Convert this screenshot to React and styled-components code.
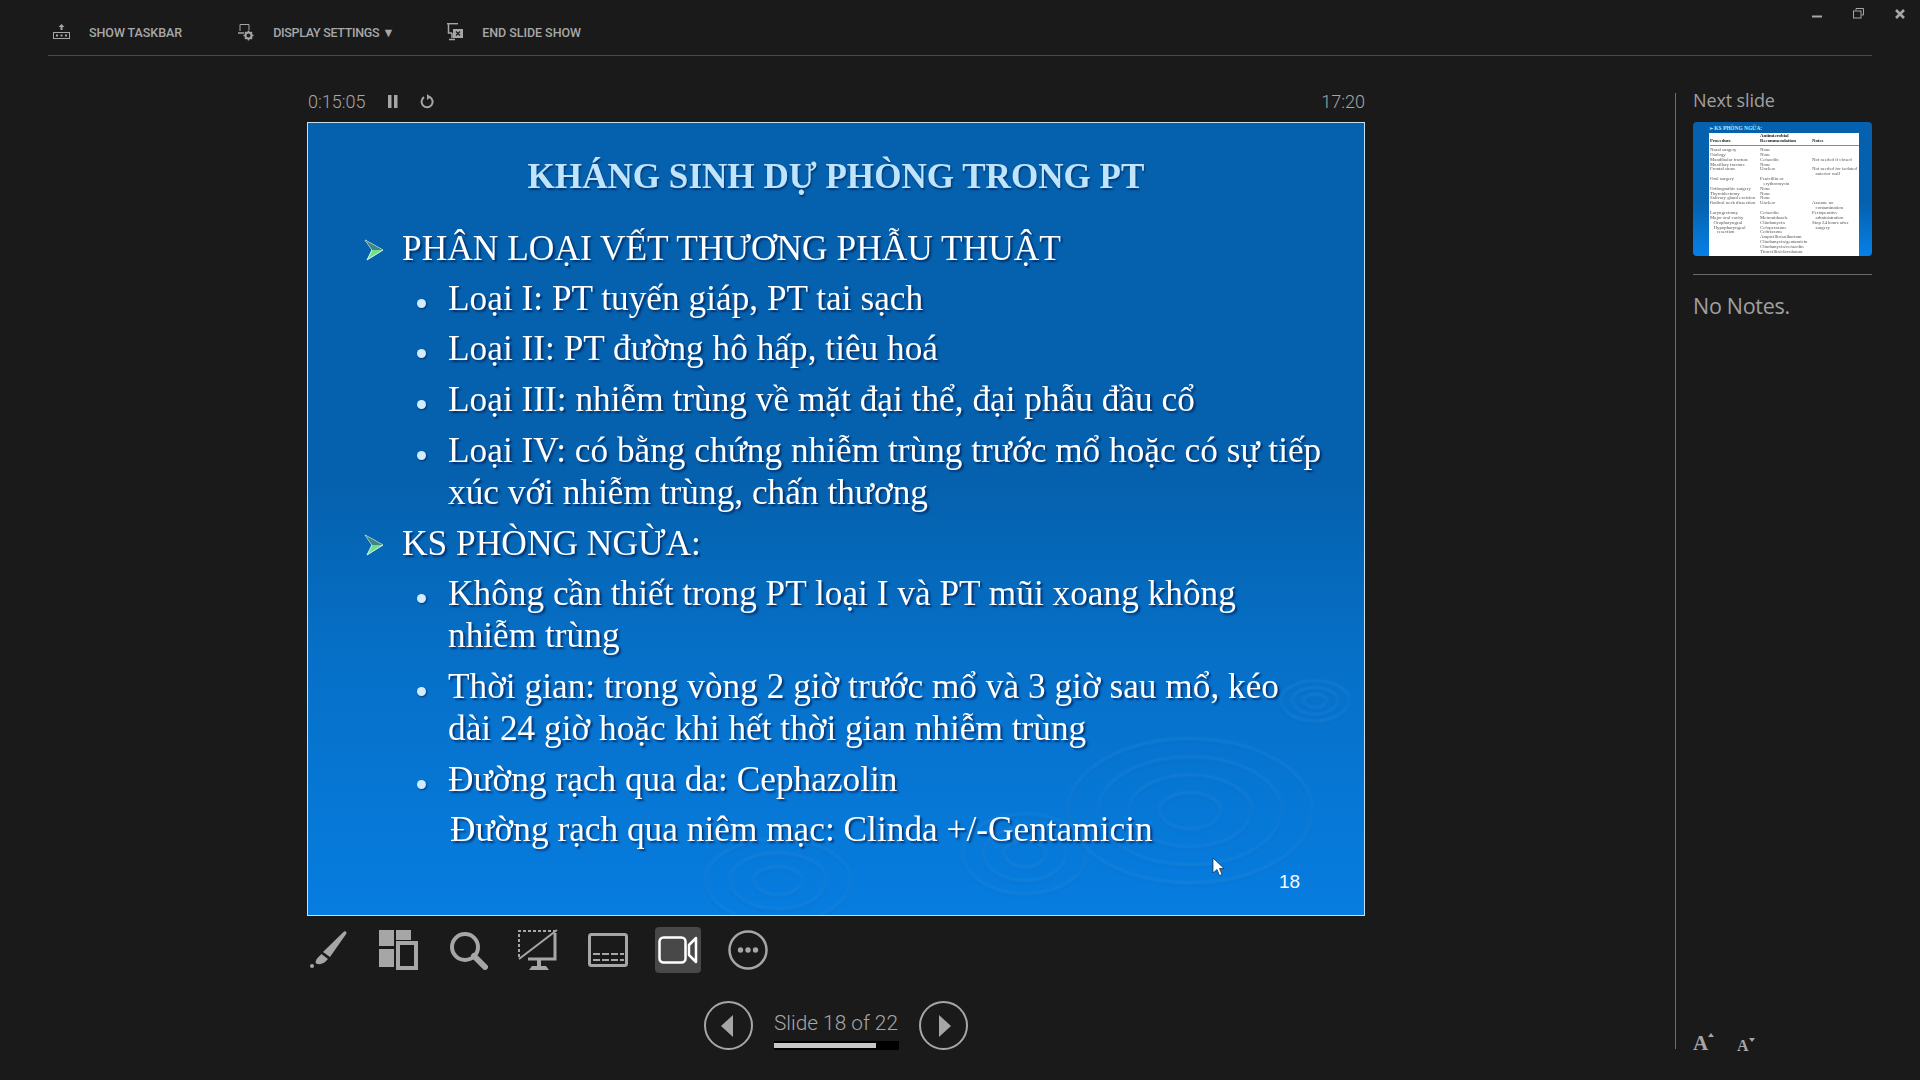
import React from "react";
import styled, { createGlobalStyle } from "styled-components";

const Global = createGlobalStyle`
  html, body { margin: 0; padding: 0; background: #1a1a1a; }
  * { box-sizing: border-box; }
  #root { width: 1920px; height: 1080px; overflow: hidden; }
`;

const Page = styled.div`
  width: 1920px; height: 1080px; background: #1a1a1a; color: #a6a6a6;
  font-family: "Roboto", "Liberation Sans", sans-serif;
  display: flex; flex-direction: column; overflow: hidden;
`;
const Header = styled.header`display: flex; height: 56px; padding-left: 48px;`;
const TopBar = styled.nav`
  flex: 1; display: flex; align-items: center; height: 56px; padding: 9px 0 0 5px;
  border-bottom: 1px solid #484848;
`;
const TopItem = styled.div`
  display: flex; align-items: center; gap: 19px; margin-right: ${p => p.$mr}px;
  font-size: 12.5px; font-weight: 500; color: #a8a8a8; white-space: nowrap; letter-spacing: ${p => p.$ls ?? -0.05}px;
`;
const WindowControls = styled.div`
  display: flex; align-self: flex-start; align-items: center; margin-left: -60px; padding-top: 5px; width: 108px; height: 22px;
`;
const Main = styled.main`display: flex; padding-top: 37px;`;
const Stage = styled.section`margin-left: 307px; width: 1058px; display: flex; flex-direction: column;`;
const TimerRow = styled.div`display: flex; align-items: center; height: 29px; padding-bottom: 13px; font-size: 18px; font-weight: 300; color: #a6a6a6;`;
const Timer = styled.span`margin-left: 1px; width: 80px;`;
const TimerIcon = styled.span`display: flex; width: 32px;`;
const Clock = styled.span`margin-left: auto;`;

const Slide = styled.div`
  position: relative; width: 1058px; height: 794px; overflow: hidden;
  border: 1px solid #c9dff0;
  background: linear-gradient(180deg, #0561ad 0%, #0561ad 45%, #0670c8 68%, #067de0 100%);
  font-family: "Liberation Serif", "Times New Roman", serif; color: #fff;
  padding: 33px 0 0;
`;
const Ripples = styled.svg`position: absolute; inset: 0; width: 100%; height: 100%; filter: blur(1.2px); opacity: .55;`;
const SlideBody = styled.div`position: relative; filter: blur(.3px);`;
const SlideTitle = styled.h1`
  margin: 0; text-align: center; font-size: 35.1px; font-weight: 700; line-height: 42px; color: #bfe4fb;
  text-shadow: 1px 2px 2px rgba(0, 20, 70, .55);
`;
const List = styled.ul`margin: 29px 0 0; padding: 0; list-style: none;`;
const Item = styled.li`
  display: flex; margin-top: ${p => (p.$first ? 0 : 8.7)}px;
  padding-left: ${p => (p.$level === 1 ? 56 : 109)}px;
  padding-right: 20px;
  font-size: ${p => (p.$level === 1 ? 35.4 : 35.3)}px; line-height: 42px; white-space: nowrap;
  text-shadow: 2px 2px 2px rgba(0, 20, 70, .65);
`;
const Arrow = styled.svg`flex: none; width: 20px; height: 22px; margin: 12px 18px 0 0;`;
const Dot = styled.span`
  flex: none; width: 9px; height: 9px; border-radius: 50%; background: #d2ecff; margin: 21px 22px 0 0;
  box-shadow: 1px 1px 2px rgba(0, 20, 70, .6);
`;
const Plain = styled.span`display: block; margin-left: 33px;`;
const PageNo = styled.div`
  position: absolute; left: 971px; top: 748px; font: 19px "Liberation Sans", sans-serif; color: #f4f8fc;
`;
const Cursor = styled.svg`position: absolute; left: 904px; top: 734px;`;

const Tools = styled.div`display: flex; gap: 24px; margin: 11px 0 0 -2px; height: 46px;`;
const Tool = styled.button`
  all: unset; width: 46px; height: 46px; display: flex; align-items: center; justify-content: center;
  border-radius: 4px; background: ${p => (p.$active ? "#484848" : "transparent")};
`;
const Nav = styled.div`display: flex; align-items: center; justify-content: center; gap: 20.5px; margin: 28px 0 0;`;
const Round = styled.button`
  all: unset; box-sizing: border-box; flex: none; width: 49px; height: 49px; border: 2px solid #a6a6a6; border-radius: 50%;
  display: flex; align-items: center; justify-content: center;
`;
const Counter = styled.div`width: 125px; display: flex; flex-direction: column; align-items: center; align-self: flex-end;`;
const CounterText = styled.span`font-size: 20.8px; font-weight: 300; line-height: 26px; color: #a6a6a6; white-space: nowrap;`;
const Track = styled.div`width: 100%; height: 9px; margin-top: 5px; background: #000; padding: 2px 0;`;
const Fill = styled.div`height: 5px; background: #c6c6c6;`;

const NotesPanel = styled.aside`
  margin-left: 310px; width: 198px; height: 956px; border-left: 1px solid #6e6e6e; padding-left: 17px;
  display: flex; flex-direction: column;
`;
const PanelTitle = styled.div`font: 400 18px/14px "Open Sans", sans-serif; letter-spacing: -0.12px; color: #a0a0a0; height: 29px;`;
const Thumb = styled.div`
  width: 179px; height: 134px; border-radius: 4px; overflow: hidden; filter: blur(.25px);
  background: linear-gradient(180deg, #0561ad 0%, #0561ad 60%, #0680e6 100%);
`;
const ThumbTitle = styled.div`
  height: 11px; padding: 3px 0 0 16px; font: 700 5.4px/6px "Liberation Serif", serif; color: #bfe4fb; white-space: nowrap;
`;
const ThumbTable = styled.div`
  margin-left: 16px; width: 150px; height: 123px; background: #fff; overflow: hidden; padding: 1px 0 0 1px;
  font: 4.8px/4.85px "Liberation Serif", serif; color: #555;
`;
const ThumbHead = styled.div`
  display: grid; grid-template-columns: 50px 52px 1fr; align-items: end; height: 12px; margin: 0 0 2px; padding-bottom: 1px;
  border-bottom: .6px solid #888; font-weight: 700; color: #222;
`;
const ThumbRow = styled.div`display: grid; grid-template-columns: 50px 52px 1fr; height: 4.85px; white-space: pre;`;
const Rule = styled.hr`margin: 18px 0 0; border: 0; border-top: 1px solid #6a6a6a; width: 179px;`;
const NoNotes = styled.div`margin-top: 18px; font: 400 21.5px/26px "Open Sans", sans-serif; letter-spacing: -0.3px; color: #a0a0a0;`;
const FontControls = styled.div`display: flex; align-items: flex-end; margin-top: auto; height: 22px; color: #a6a6a6; font-family: "Liberation Serif", serif; font-weight: 700;`;
const FontButton = styled.div`
  display: flex; align-items: flex-start; width: ${p => p.$w}px; font-size: ${p => p.$size}px; line-height: ${p => p.$size}px; margin-bottom: -5px;
`;

const rows = [
  ["Nasal surgery", "None", ""], ["Otology", "None", ""],
  ["Mandibular fracture", "Cefazolin", "Not needed if closed"], ["Maxillary fracture", "None", ""],
  ["Frontal sinus", "Unclear", "Not needed for isolated"], ["", "", "   anterior wall"],
  ["Oral surgery", "Penicillin or", ""], ["", "   erythromycin", ""],
  ["Orthognathic surgery", "None", ""], ["Thyroidectomy", "None", ""],
  ["Salivary gland excision", "None", ""], ["Radical neck dissection", "Unclear", "Assume no"],
  ["", "", "   contamination"], ["Laryngectomy", "Cefazolin", "Perioperative"],
  ["Major oral cavity", "Metronidazole", "   administration"], ["   Oropharyngeal", "Clindamycin", "Stop 24 hours after"],
  ["   Hypopharyngeal", "Cefoperazone", "   surgery"], ["      resection", "Ceftriaxone", ""],
  ["", "Ampicillin/sulbactam", ""], ["", "Clindamycin/gentamicin", ""],
  ["", "Clindamycin/cefazolin", ""], ["", "Ticarcillin/clavulanate", ""],
];

const slideItems = [
  [1, "PHÂN LOẠI VẾT THƯƠNG PHẪU THUẬT"],
  [2, "Loại I: PT tuyến giáp, PT tai sạch"],
  [2, "Loại II: PT đường hô hấp, tiêu hoá"],
  [2, "Loại III: nhiễm trùng về mặt đại thể, đại phẫu đầu cổ"],
  [2, <>Loại IV: có bằng chứng nhiễm trùng trước mổ hoặc có sự tiếp<br />xúc với nhiễm trùng, chấn thương</>],
  [1, "KS PHÒNG NGỪA:"],
  [2, <>Không cần thiết trong PT loại I và PT mũi xoang không<br />nhiễm trùng</>],
  [2, <>Thời gian: trong vòng 2 giờ trước mổ và 3 giờ sau mổ, kéo<br />dài 24 giờ hoặc khi hết thời gian nhiễm trùng</>],
  [2, "Đường rạch qua da: Cephazolin"],
  [3, "Đường rạch qua niêm mạc: Clinda +/-Gentamicin"],
];

const C = "#a6a6a6";

const RippleSet = ({ cx, cy, rx, ry, n = 4 }) => (
  <g fill="none">
    {Array.from({ length: n }).map((_, i) => {
      const k = (i + 1) / n;
      return (
        <g key={i}>
          <ellipse cx={cx} cy={cy} rx={rx * k} ry={ry * k} stroke="#2f8fe0" strokeOpacity=".55" strokeWidth="3" />
          <ellipse cx={cx} cy={cy + 2} rx={rx * k} ry={ry * k} stroke="#0460b4" strokeOpacity=".4" strokeWidth="2" />
        </g>
      );
    })}
  </g>
);

export default function App() {
  return (
    <Page>
      <Global />
      <Header>
        <TopBar>
          <TopItem $mr={56}>
            <svg width="17" height="16" viewBox="0 0 17 16" fill="none" stroke={C}>
              <path d="M8.5 0l3 3h-2v3h-2V3h-2z" fill={C} stroke="none" />
              <rect x=".5" y="8.5" width="16" height="6" />
              <path d="M3 11.5h2M7.5 11.5h2M12 11.5h2" strokeWidth="2" />
            </svg>
            SHOW TASKBAR
          </TopItem>
          <TopItem $mr={53} $ls={-0.3}>
            <svg width="16" height="17" viewBox="0 0 16 17" fill="none" stroke={C}>
              <path d="M2 7V.5h9V6" />
              <path d="M0 9h6" strokeWidth="1.5" />
              <circle cx="10.5" cy="11.5" r="3" strokeWidth="2" />
              <path d="M10.5 6.5v1.5M10.5 15v1.5M5.5 11.5h1.5M14 11.5h1.5M7 8l1 1M13 14l1 1M7 15l1-1M13 9l1-1" strokeWidth="1.5" />
            </svg>
            DISPLAY SETTINGS ▼
          </TopItem>
          <TopItem>
            <svg width="16" height="18" viewBox="0 0 16 18" fill="none" stroke={C}>
              <path d="M0 .7h11" strokeWidth="1.4" />
              <path d="M1.5 1v9h3.5M5 10v5M2 16.5h6" strokeWidth="1.5" />
              <rect x="6" y="6" width="10" height="9" fill={C} stroke="none" />
              <path d="M9 8.5l4 4M13 8.5l-4 4" stroke="#1a1a1a" strokeWidth="1.2" />
            </svg>
            END SLIDE SHOW
          </TopItem>
        </TopBar>
        <WindowControls>
          <svg width="10" height="16" viewBox="0 0 10 16"><path d="M0 10.5h10" stroke={C} strokeWidth="2" /></svg>
          <svg width="11" height="11" viewBox="0 0 11 11" fill="none" stroke={C} style={{ marginLeft: 31 }}>
            <path d="M3 2V.5h7.5V7H8.5" /><rect x=".5" y="3" width="7.5" height="7" />
          </svg>
          <svg width="10" height="10" viewBox="0 0 10 10" style={{ marginLeft: 31 }}><path d="M1 1l8 8M9 1l-8 8" stroke={C} strokeWidth="2.6" /></svg>
        </WindowControls>
      </Header>
      <Main>
        <Stage>
          <TimerRow>
            <Timer>0:15:05</Timer>
            <TimerIcon>
              <svg width="10" height="13" viewBox="0 0 10 13"><path d="M0 0h3.5v13H0zM6 0h3.5v13H6z" fill={C} /></svg>
            </TimerIcon>
            <TimerIcon>
              <svg width="14" height="15" viewBox="0 0 14 15" fill="none"><path d="M4 3.2a5.5 5.5 0 1 0 5.5-.4" stroke={C} strokeWidth="2" /><path d="M7 0v6L11 3z" fill={C} /></svg>
            </TimerIcon>
            <Clock>17:20</Clock>
          </TimerRow>
          <Slide>
            <Ripples viewBox="0 0 1056 792">
              <RippleSet cx={882} cy={688} rx={122} ry={72} />
              <RippleSet cx={717} cy={731} rx={62} ry={40} n={3} />
              <RippleSet cx={470} cy={758} rx={72} ry={42} n={3} />
              <RippleSet cx={1007} cy={578} rx={34} ry={20} n={3} />
            </Ripples>
            <SlideBody>
              <SlideTitle>KHÁNG SINH DỰ PHÒNG TRONG PT</SlideTitle>
              <List>
                {slideItems.map(([level, text], i) => (
                  <Item key={i} $level={level === 1 ? 1 : 2} $first={i === 0}>
                    {level === 1 && (
                      <Arrow viewBox="0 0 20 22">
                        <path d="M1 1l18 10L3 21l5-10z" fill="#6fe08a" stroke="#dff7e4" strokeWidth="1" />
                        <path d="M1 1l18 10H8z" fill="#173f7a" opacity=".55" />
                      </Arrow>
                    )}
                    {level === 2 && <Dot />}
                    {level === 3 ? <Plain>{text}</Plain> : <span>{text}</span>}
                  </Item>
                ))}
              </List>
            </SlideBody>
            <Cursor width="13" height="20" viewBox="0 0 13 20"><path d="M1 1v15l4-3.5 2.5 6 2.5-1-2.5-6H12z" fill="#fff" stroke="#123" strokeWidth=".7" /></Cursor>
            <PageNo>18</PageNo>
          </Slide>
          <Tools>
            <Tool>
              <svg width="40" height="40" viewBox="0 0 40 40">
                <path d="M36 1.5c1.6-.8 3 .6 2.3 2.2L22 27 15 22z" fill={C} />
                <path d="M13.5 24l6.5 5-3 3c-3 2-6 3-9 1.500-1-1.500 0-4 2-6z" fill={C} />
                <circle cx="4" cy="36" r="2" fill={C} />
              </svg>
            </Tool>
            <Tool>
              <svg width="40" height="40" viewBox="0 0 40 40" fill={C}>
                <rect x="1" y="0" width="15" height="16" /><rect x="18" y="0" width="15" height="10" />
                <rect x="1" y="19" width="15" height="18" />
                <rect x="20" y="13" width="18" height="25" fill="none" stroke={C} strokeWidth="4" />
              </svg>
            </Tool>
            <Tool>
              <svg width="40" height="40" viewBox="0 0 40 40" fill="none" stroke={C}>
                <circle cx="17" cy="17" r="13" strokeWidth="4" />
                <path d="M26 26l11 11" strokeWidth="6" strokeLinecap="round" />
              </svg>
            </Tool>
            <Tool>
              <svg width="40" height="42" viewBox="0 0 40 42" fill="none" stroke={C}>
                <path d="M1 28V2h37" strokeWidth="2" strokeDasharray="3 2" />
                <path d="M1 30L39 1" strokeWidth="2" />
                <path d="M37 4v26H10" strokeWidth="3" />
                <path d="M19 30h4v7h-4z" fill={C} stroke="none" />
                <path d="M11 41l3-4h14l3 4z" fill={C} stroke="none" />
              </svg>
            </Tool>
            <Tool>
              <svg width="40" height="34" viewBox="0 0 40 34" fill="none" stroke={C}>
                <rect x="1.5" y="1.500" width="37" height="31" rx="2" strokeWidth="3" />
                <path d="M5 21h31M5 27h31" strokeWidth="2" strokeDasharray="7 2" />
              </svg>
            </Tool>
            <Tool $active>
              <svg width="40" height="28" viewBox="0 0 40 28" fill="none" stroke="#fff" strokeWidth="2.500" strokeLinejoin="round">
                <rect x="1.500" y="1.500" width="26" height="25" rx="4" />
                <path d="M38 2v24l-7-7V9z" />
              </svg>
            </Tool>
            <Tool>
              <svg width="40" height="40" viewBox="0 0 40 40" fill={C}>
                <circle cx="20" cy="20" r="18.500" fill="none" stroke={C} strokeWidth="2.500" />
                <circle cx="12.500" cy="20" r="2.700" /><circle cx="20" cy="20" r="2.700" /><circle cx="27.500" cy="20" r="2.700" />
              </svg>
            </Tool>
          </Tools>
          <Nav>
            <Round><svg width="12" height="22" viewBox="0 0 12 22" style={{ marginRight: 3 }}><path d="M12 0v22L0 11z" fill={C} /></svg></Round>
            <Counter>
              <CounterText>Slide 18 of 22</CounterText>
              <Track><Fill style={{ width: `${(18 / 22) * 100}%` }} /></Track>
            </Counter>
            <Round><svg width="12" height="22" viewBox="0 0 12 22" style={{ marginLeft: 3 }}><path d="M0 0v22l12-11z" fill={C} /></svg></Round>
          </Nav>
        </Stage>
        <NotesPanel>
          <PanelTitle>Next slide</PanelTitle>
          <Thumb>
            <ThumbTitle>➢ KS PHÒNG NGỪA:</ThumbTitle>
            <ThumbTable>
              <ThumbHead><span>Procedure</span><span>Antimicrobial<br />Recommendation</span><span>Notes</span></ThumbHead>
              {rows.map((r, i) => (
                <ThumbRow key={i}><span>{r[0]}</span><span>{r[1]}</span><span>{r[2]}</span></ThumbRow>
              ))}
            </ThumbTable>
          </Thumb>
          <Rule />
          <NoNotes>No Notes.</NoNotes>
          <FontControls>
            <FontButton $w={44} $size={21}>A<svg width="6" height="4" viewBox="0 0 6 4"><path d="M3 0l3 4H0z" fill={C} /></svg></FontButton>
            <FontButton $w={30} $size={16}>A<svg width="6" height="4" viewBox="0 0 6 4"><path d="M0 0h6L3 4z" fill={C} /></svg></FontButton>
          </FontControls>
        </NotesPanel>
      </Main>
    </Page>
  );
}
